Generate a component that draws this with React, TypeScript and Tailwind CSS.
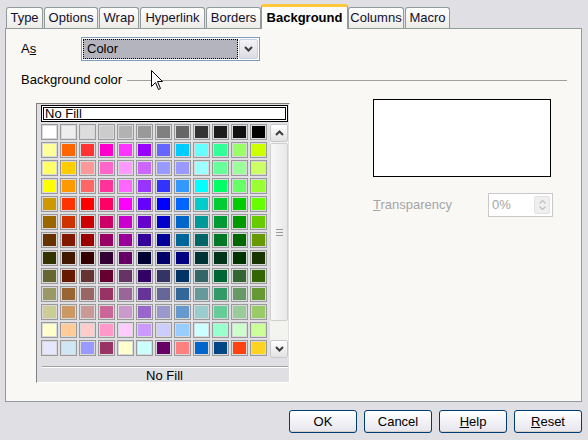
const font = "font-['Liberation_Sans',Arial,sans-serif]";

const palette: string[][] = [
  ["#ffffff", "#eeeeee", "#dddddd", "#cccccc", "#b2b2b2", "#999999", "#808080", "#666666", "#333333", "#1c1c1c", "#111111", "#000000"],
  ["#ffff99", "#ff6600", "#ff3333", "#ff00cc", "#ff33ff", "#9900ff", "#6666ff", "#00ccff", "#66ffff", "#33ff99", "#99ff66", "#ccff00"],
  ["#ffff66", "#ffcc00", "#ff9999", "#ff66cc", "#ff99ff", "#cc66ff", "#9999ff", "#9999ff", "#99ffff", "#66ff99", "#99ff99", "#ccff66"],
  ["#ffff00", "#ff9900", "#ff6666", "#ff3399", "#ff66ff", "#9933ff", "#3333ff", "#3399ff", "#00ffff", "#00ff66", "#66ff66", "#99ff33"],
  ["#cc9900", "#ff3300", "#ff0000", "#ff0066", "#ff00ff", "#6600ff", "#0000ff", "#0066ff", "#00cccc", "#00cc33", "#00cc00", "#66ff00"],
  ["#996600", "#cc3300", "#cc0000", "#cc0066", "#cc00cc", "#6600cc", "#0000cc", "#0066cc", "#009999", "#009933", "#009900", "#66cc00"],
  ["#663300", "#801900", "#990000", "#990066", "#990099", "#330099", "#000099", "#006699", "#006666", "#007826", "#006600", "#669900"],
  ["#333300", "#401900", "#330000", "#330033", "#660066", "#000033", "#000066", "#000080", "#003333", "#00331a", "#003300", "#193300"],
  ["#666633", "#661900", "#663333", "#660033", "#663366", "#330066", "#333366", "#003366", "#336666", "#006633", "#336633", "#336600"],
  ["#999966", "#996633", "#996666", "#993366", "#996699", "#663399", "#666699", "#336699", "#669999", "#339966", "#669966", "#669933"],
  ["#cccc99", "#cc9966", "#cc9999", "#cc6699", "#cc99cc", "#9966cc", "#9999cc", "#6699cc", "#99cccc", "#66cc99", "#99cc99", "#99cc66"],
  ["#ffffcc", "#ffcc99", "#ffcccc", "#ff99cc", "#ffccff", "#cc99ff", "#ccccff", "#99ccff", "#ccffff", "#99ffcc", "#ccffcc", "#ccff99"],
  ["#e6e6ff", "#cfe7f5", "#9999ff", "#993366", "#ffffcc", "#ccffff", "#660066", "#ff8080", "#0066cc", "#004586", "#ff420e", "#ffd320"],
];

const tabs = ["Type", "Options", "Wrap", "Hyperlink", "Borders", "Background", "Columns", "Macro"];
const tabWidths: Record<string, string> = {
  Type: "w-[37px]",
  Options: "w-[54px]",
  Wrap: "w-[40px]",
  Hyperlink: "w-[65px]",
  Borders: "w-[55px]",
  Background: "w-[87px]",
  Columns: "w-[56px]",
  Macro: "w-[45px]",
};

function Chevron({ up, color = "#3c3c3c" }: { up?: boolean; color?: string }) {
  return (
    <svg width="9" height="6" viewBox="0 0 9 6">
      <path d={up ? "M1 5 L4.5 1.5 L8 5" : "M1 1 L4.5 4.5 L8 1"} fill="none" stroke={color} strokeWidth="2" />
    </svg>
  );
}

function Button({ label, u }: { label: string; u?: boolean }) {
  return (
    <button className="w-[68px] h-[23px] rounded-[3px] border border-[#003c74] bg-gradient-to-b from-white to-[#e6e5ee] text-[13px] text-black shadow-[inset_0_-1px_0_#d6d0c5]">
      {u ? (
        <>
          <span className="underline">{label[0]}</span>
          {label.slice(1)}
        </>
      ) : (
        label
      )}
    </button>
  );
}

export default function App() {
  return (
    <div className={`${font} relative w-[588px] h-[440px] bg-[#e0dfe3] text-[12px] text-black overflow-hidden`}>
      {/* tabs */}
      <div className="flex items-end h-[28px] pl-[6px] gap-[1px]">
        {tabs.map((t) =>
          t === "Background" ? (
            <div
              key={t}
              className={`${tabWidths[t]} relative z-10 -mb-px -mx-px h-[25px] rounded-t-[3px] border-x border-[#919b9c] border-t-[3px] border-t-[#ffc83c] bg-[#fbfbf9] flex items-center justify-center font-bold text-[13px] text-[#000]`}
            >
              {t}
            </div>
          ) : (
            <div
              key={t}
              className={`${tabWidths[t]} h-[21px] rounded-t-[3px] border-x border-t border-[#919b9c] bg-gradient-to-b from-white to-[#ecebe6] flex items-center justify-center text-[13px] text-[#101030]`}
            >
              {t}
            </div>
          )
        )}
      </div>

      {/* panel */}
      <div className="ml-[5px] w-[577px] h-[374px] border border-[#919b9c] bg-[#f9f8f5] pl-[15px] pt-[8px]">
        <div className="flex items-center h-[24px]">
          <span className="w-[60px] text-[13px]">
            A<span className="underline">s</span>
          </span>
          <div className="w-[179px] h-[24px] border border-[#7f9db9] bg-white flex items-center p-[1px]">
            <div className="flex-1 h-full bg-[#b4b4bf] border border-dotted border-black flex items-center pl-[3px] text-[13px]">
              Color
            </div>
            <div className="w-[19px] h-[20px] ml-[1px] rounded-[2px] border border-[#c6cfdd] bg-gradient-to-b from-[#f4f4f6] to-[#dcdce4] flex items-center justify-center">
              <Chevron />
            </div>
          </div>
        </div>

        <div className="flex items-center mt-[12px] h-[14px]">
          <span className="text-[13px]">Background color</span>
          <div className="flex-1 h-px bg-[#a0a0a0] ml-[5px] mr-[14px]" />
        </div>

        <div className="flex items-start mt-[12px]">
          {/* colour box */}
          <div className="ml-[15px] mt-[4px] w-[254px] h-[280px] border border-t-[#808080] border-l-[#808080] border-r-white border-b-white bg-[#e0dfe3] pl-[4px] pt-[1px]">
            <div className="w-[247px] h-[17px] border-[3px] border-double border-black bg-white flex items-center pl-[1px] text-[13px] leading-none">
              No Fill
            </div>
            <div className="flex mt-[2px]">
              <div className="grid grid-cols-12 w-[228px]">
                {palette.flat().map((c, i) => (
                  <div key={i} className="w-[19px] h-[18px]">
                    <div className="w-[17px] h-[16px] border border-[#9a9a9a] bg-[#d9d9d9] p-px">
                      <div className="w-full h-full" style={{ background: c }} />
                    </div>
                  </div>
                ))}
              </div>
              <div className="ml-[1px] w-[18px] h-[234px] bg-[#f3f3ef] flex flex-col">
                <div className="h-[18px] rounded-[2px] border border-[#c8c8c8] bg-gradient-to-b from-white to-[#e2e2e2] flex items-center justify-center">
                  <Chevron up />
                </div>
                <div className="mt-[1px] h-[178px] rounded-[2px] border border-[#d0d0d0] bg-gradient-to-r from-[#f8f8f8] to-[#e8e8e8] flex items-center justify-center">
                  <div className="flex flex-col gap-[2px] w-[7px]">
                    <div className="h-px bg-[#9a9a9a]" />
                    <div className="h-px bg-[#9a9a9a]" />
                    <div className="h-px bg-[#9a9a9a]" />
                  </div>
                </div>
                <div className="flex-1" />
                <div className="h-[18px] rounded-[2px] border border-[#c8c8c8] bg-gradient-to-b from-white to-[#e2e2e2] flex items-center justify-center">
                  <Chevron />
                </div>
              </div>
            </div>
            <div className="mt-[8px] w-[246px] ml-px h-px bg-[#a0a0a0]" />
            <div className="w-[246px] ml-px h-px bg-white" />
            <div className="w-[247px] text-center text-[13px] leading-[13px] mt-[1px]">No Fill</div>
          </div>

          {/* right side */}
          <div className="ml-[83px] flex flex-col">
            <div className="w-[178px] h-[78px] border border-black bg-white" />
            <div className="flex items-center mt-[16px] h-[24px]">
              <span className="w-[115px] text-[13px] text-[#a5a5a5]">
                <span className="underline">T</span>ransparency
              </span>
              <div className="w-[65px] h-[24px] border border-[#c9c9c9] bg-white flex items-center pl-[3px] pr-[2px] text-[13px] text-[#a5a5a5]">
                <span className="flex-1">0%</span>
                <div className="w-[16px] h-[18px] rounded-[2px] bg-[#efefef] border border-[#e2e2e2] flex flex-col items-center justify-center gap-[2px]">
                  <svg width="7" height="4" viewBox="0 0 7 4">
                    <path d="M0.5 3.5 L3.5 0.5 L6.5 3.5" fill="none" stroke="#c0c0c0" strokeWidth="1.2" />
                  </svg>
                  <svg width="7" height="4" viewBox="0 0 7 4">
                    <path d="M0.5 0.5 L3.5 3.5 L6.5 0.5" fill="none" stroke="#c0c0c0" strokeWidth="1.2" />
                  </svg>
                </div>
              </div>
            </div>
          </div>
        </div>
      </div>

      {/* buttons */}
      <div className="flex justify-end gap-[7px] mt-[8px] pr-[6px]">
        <Button label="OK" />
        <Button label="Cancel" />
        <Button label="Help" u />
        <Button label="Reset" u />
      </div>

      {/* mouse pointer */}
      <svg className="absolute left-[151px] top-[70px]" width="13" height="21" viewBox="0 0 13 21">
        <path d="M0.5 0.5 L0.5 16.5 L4.5 12.5 L7.5 19.5 L9.5 18.5 L6.5 11.5 L11.5 11.5 Z" fill="white" stroke="black" strokeWidth="1" />
      </svg>
    </div>
  );
}
